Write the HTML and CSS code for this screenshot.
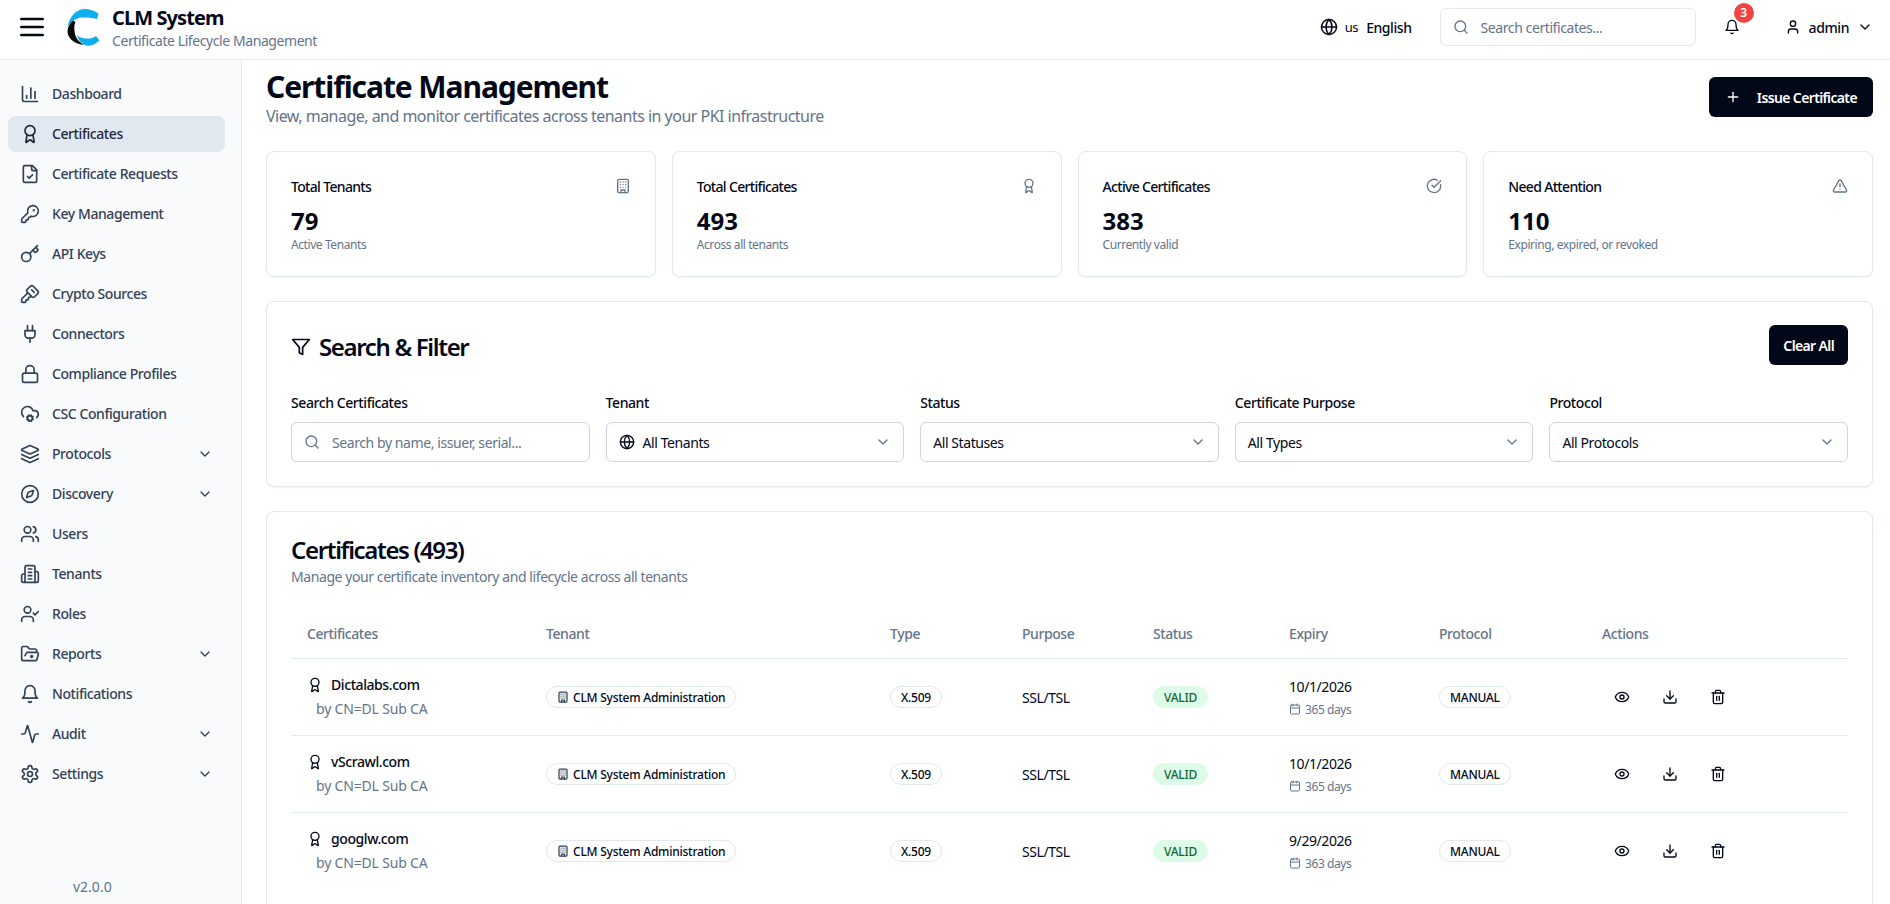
FILE: index.html
```html
<!DOCTYPE html>
<html lang="en">

<head>
    <meta charset="UTF-8">
    <title>CLM System - Certificates</title>
    <link rel="stylesheet" href="styles.css">
</head>

<body>
    <svg class="sprite" xmlns="http://www.w3.org/2000/svg">
        <symbol id="i-menu" viewBox="0 0 24 24"><path d="M4 6h16M4 12h16M4 18h16"/></symbol>
        <symbol id="i-chart" viewBox="0 0 24 24"><path d="M3 3v16a2 2 0 0 0 2 2h16"/><path d="M18 17V9"/><path d="M13 17V5"/><path d="M8 17v-3"/></symbol>
        <symbol id="i-award" viewBox="0 0 24 24"><path d="m15.477 12.89 1.515 8.526a.5.5 0 0 1-.81.47l-3.58-2.687a1 1 0 0 0-1.197 0l-3.586 2.686a.5.5 0 0 1-.81-.469l1.514-8.526"/><circle cx="12" cy="8" r="6"/></symbol>
        <symbol id="i-file-check" viewBox="0 0 24 24"><path d="M15 2H6a2 2 0 0 0-2 2v16a2 2 0 0 0 2 2h12a2 2 0 0 0 2-2V7Z"/><path d="M14 2v4a2 2 0 0 0 2 2h4"/><path d="m9 15 2 2 4-4"/></symbol>
        <symbol id="i-key-round" viewBox="0 0 24 24"><path d="M2.586 17.414A2 2 0 0 0 2 18.828V21a1 1 0 0 0 1 1h3a1 1 0 0 0 1-1v-1a1 1 0 0 1 1-1h1a1 1 0 0 0 1-1v-1a1 1 0 0 1 1-1h.172a2 2 0 0 0 1.414-.586l.814-.814a6.5 6.5 0 1 0-4-4z"/><circle cx="16.5" cy="7.5" r=".5"/></symbol>
        <symbol id="i-key" viewBox="0 0 24 24"><path d="m15.5 7.5 2.3 2.3a1 1 0 0 0 1.4 0l2.1-2.1a1 1 0 0 0 0-1.4L19 4"/><path d="m21 2-9.6 9.6"/><circle cx="7.5" cy="15.5" r="5.5"/></symbol>
        <symbol id="i-key-square" viewBox="0 0 24 24"><path d="M12.4 2.7a2.5 2.5 0 0 1 3.4 0l5.5 5.5a2.5 2.5 0 0 1 0 3.4l-3.7 3.7a2.5 2.5 0 0 1-3.4 0L8.7 9.8a2.5 2.5 0 0 1 0-3.4z"/><path d="m14 7 3 3"/><path d="m9.4 10.6-6.814 6.814A2 2 0 0 0 2 18.828V21a1 1 0 0 0 1 1h3a1 1 0 0 0 1-1v-1a1 1 0 0 1 1-1h1a1 1 0 0 0 1-1v-1a1 1 0 0 1 1-1h.172a2 2 0 0 0 1.414-.586l.814-.814"/></symbol>
        <symbol id="i-plug" viewBox="0 0 24 24"><path d="M12 22v-5"/><path d="M9 8V2"/><path d="M15 8V2"/><path d="M18 8v5a4 4 0 0 1-4 4h-4a4 4 0 0 1-4-4V8Z"/></symbol>
        <symbol id="i-lock" viewBox="0 0 24 24"><rect x="3" y="11" width="18" height="11" rx="2"/><path d="M7 11V7a5 5 0 0 1 10 0v4"/></symbol>
        <symbol id="i-cloud-cog" viewBox="0 0 24 24"><path d="M4.2 15.1A7 7 0 1 1 15.71 8h1.79a4.5 4.5 0 0 1 2.5 8.2"/><circle cx="12" cy="17" r="3"/><path d="m15.7 18.4-.9-.3"/><path d="m9.2 15.9-.9-.3"/><path d="m10.6 20.7.3-.9"/><path d="m13.1 14.2.3-.9"/><path d="m13.6 20.7-.4-1"/><path d="m10.8 14.3-.4-1"/><path d="m8.3 18.6 1-.4"/><path d="m14.7 15.8 1-.4"/></symbol>
        <symbol id="i-layers" viewBox="0 0 24 24"><path d="m12.83 2.18a2 2 0 0 0-1.66 0L2.6 6.08a1 1 0 0 0 0 1.83l8.58 3.91a2 2 0 0 0 1.66 0l8.58-3.9a1 1 0 0 0 0-1.83Z"/><path d="m22 17.65-9.17 4.16a2 2 0 0 1-1.66 0L2 17.65"/><path d="m22 12.65-9.17 4.16a2 2 0 0 1-1.66 0L2 12.65"/></symbol>
        <symbol id="i-compass" viewBox="0 0 24 24"><circle cx="12" cy="12" r="10"/><path d="m16.24 7.76-1.804 5.411a2 2 0 0 1-1.265 1.265L7.76 16.24l1.804-5.411a2 2 0 0 1 1.265-1.265z"/></symbol>
        <symbol id="i-users" viewBox="0 0 24 24"><path d="M16 21v-2a4 4 0 0 0-4-4H6a4 4 0 0 0-4 4v2"/><circle cx="9" cy="7" r="4"/><path d="M22 21v-2a4 4 0 0 0-3-3.87"/><path d="M16 3.13a4 4 0 0 1 0 7.75"/></symbol>
        <symbol id="i-building-2" viewBox="0 0 24 24"><path d="M6 22V4a2 2 0 0 1 2-2h8a2 2 0 0 1 2 2v18Z"/><path d="M6 12H4a2 2 0 0 0-2 2v6a2 2 0 0 0 2 2h2"/><path d="M18 9h2a2 2 0 0 1 2 2v9a2 2 0 0 1-2 2h-2"/><path d="M10 6h4"/><path d="M10 10h4"/><path d="M10 14h4"/><path d="M10 18h4"/></symbol>
        <symbol id="i-user-check" viewBox="0 0 24 24"><path d="M16 21v-2a4 4 0 0 0-4-4H6a4 4 0 0 0-4 4v2"/><circle cx="9" cy="7" r="4"/><path d="m16 11 2 2 4-4"/></symbol>
        <symbol id="i-folder" viewBox="0 0 24 24"><path d="m6 14 1.45-2.9A2 2 0 0 1 9.24 10H20a2 2 0 0 1 1.94 2.5l-1.55 6a2 2 0 0 1-1.94 1.5H4a2 2 0 0 1-2-2V5c0-1.1.9-2 2-2h3.93a2 2 0 0 1 1.66.9l.82 1.2a2 2 0 0 0 1.66.9H18a2 2 0 0 1 2 2v2"/><circle cx="14" cy="15" r="1"/></symbol>
        <symbol id="i-bell" viewBox="0 0 24 24"><path d="M6 8a6 6 0 0 1 12 0c0 7 3 9 3 9H3s3-2 3-9"/><path d="M10.3 21a1.94 1.94 0 0 0 3.4 0"/></symbol>
        <symbol id="i-activity" viewBox="0 0 24 24"><path d="M22 12h-2.48a2 2 0 0 0-1.93 1.46l-2.35 8.36a.25.25 0 0 1-.48 0L9.24 2.18a.25.25 0 0 0-.48 0l-2.35 8.36A2 2 0 0 1 4.49 12H2"/></symbol>
        <symbol id="i-settings" viewBox="0 0 24 24"><path d="M12.22 2h-.44a2 2 0 0 0-2 2v.18a2 2 0 0 1-1 1.73l-.43.25a2 2 0 0 1-2 0l-.15-.08a2 2 0 0 0-2.73.73l-.22.38a2 2 0 0 0 .73 2.73l.15.1a2 2 0 0 1 1 1.72v.51a2 2 0 0 1-1 1.74l-.15.09a2 2 0 0 0-.73 2.73l.22.38a2 2 0 0 0 2.73.73l.15-.08a2 2 0 0 1 2 0l.43.25a2 2 0 0 1 1 1.73V20a2 2 0 0 0 2 2h.44a2 2 0 0 0 2-2v-.18a2 2 0 0 1 1-1.73l.43-.25a2 2 0 0 1 2 0l.15.08a2 2 0 0 0 2.73-.73l.22-.39a2 2 0 0 0-.73-2.73l-.15-.08a2 2 0 0 1-1-1.74v-.5a2 2 0 0 1 1-1.74l.15-.09a2 2 0 0 0 .73-2.73l-.22-.38a2 2 0 0 0-2.73-.73l-.15.08a2 2 0 0 1-2 0l-.43-.25a2 2 0 0 1-1-1.73V4a2 2 0 0 0-2-2z"/><circle cx="12" cy="12" r="3"/></symbol>
        <symbol id="i-chevron" viewBox="0 0 24 24"><path d="m6 9 6 6 6-6"/></symbol>
        <symbol id="i-globe" viewBox="0 0 24 24"><circle cx="12" cy="12" r="10"/><path d="M12 2a14.5 14.5 0 0 0 0 20 14.5 14.5 0 0 0 0-20"/><path d="M2 12h20"/></symbol>
        <symbol id="i-search" viewBox="0 0 24 24"><path d="m21 21-4.3-4.3"/><circle cx="11" cy="11" r="8"/></symbol>
        <symbol id="i-user" viewBox="0 0 24 24"><path d="M19 21v-2a4 4 0 0 0-4-4H9a4 4 0 0 0-4 4v2"/><circle cx="12" cy="7" r="4"/></symbol>
        <symbol id="i-plus" viewBox="0 0 24 24"><path d="M5 12h14"/><path d="M12 5v14"/></symbol>
        <symbol id="i-building" viewBox="0 0 24 24"><rect x="4" y="2" width="16" height="20" rx="2"/><path d="M9 22v-4h6v4"/><path d="M8 6h.01M12 6h.01M16 6h.01M8 10h.01M12 10h.01M16 10h.01M8 14h.01M12 14h.01M16 14h.01"/></symbol>
        <symbol id="i-check" viewBox="0 0 24 24"><path d="M21.801 10A10 10 0 1 1 17 3.335"/><path d="m9 11 3 3L22 4"/></symbol>
        <symbol id="i-alert" viewBox="0 0 24 24"><path d="m21.73 18-8-14a2 2 0 0 0-3.48 0l-8 14A2 2 0 0 0 4 21h16a2 2 0 0 0 1.73-3"/><path d="M12 9v4"/><path d="M12 17h.01"/></symbol>
        <symbol id="i-filter" viewBox="0 0 24 24"><path d="M22 3H2l8 9.46V19l4 2v-8.54Z"/></symbol>
        <symbol id="i-calendar" viewBox="0 0 24 24"><path d="M8 2v4"/><path d="M16 2v4"/><rect x="3" y="4" width="18" height="18" rx="2"/><path d="M3 10h18"/></symbol>
        <symbol id="i-eye" viewBox="0 0 24 24"><path d="M2.062 12.348a1 1 0 0 1 0-.696 10.75 10.75 0 0 1 19.876 0 1 1 0 0 1 0 .696 10.75 10.75 0 0 1-19.876 0"/><circle cx="12" cy="12" r="3"/></symbol>
        <symbol id="i-download" viewBox="0 0 24 24"><path d="M21 15v4a2 2 0 0 1-2 2H5a2 2 0 0 1-2-2v-4"/><path d="m7 10 5 5 5-5"/><path d="M12 15V3"/></symbol>
        <symbol id="i-trash" viewBox="0 0 24 24"><path d="M3 6h18"/><path d="M19 6v14c0 1-1 2-2 2H7c-1 0-2-1-2-2V6"/><path d="M8 6V4c0-1 1-2 2-2h4c1 0 2 1 2 2v2"/><path d="M10 11v6"/><path d="M14 11v6"/></symbol>
    </svg>

    <header class="topbar">
        <button class="menu-btn" type="button"><svg class="icon icon-menu"><use href="#i-menu"/></svg></button>
        <svg class="logo" viewBox="0 0 33 37" xmlns="http://www.w3.org/2000/svg">
            <path class="logo-blue" d="M31.5 4.7C27 1.5 22.5 0 18 0 9 0 2 8 .5 18.5 3 13.5 8.5 9 15 8.6c5.5-.4 11 .2 15 1.5Z"/>
            <path class="logo-blue" d="M9.5 26C13 29 19 30 23 29.5c2.5-.5 4.5-1.5 6-2.5l3.5 4.5C29 34.5 25.5 36.5 22 36.8 18 37 14 34 12 31Z"/>
            <path class="logo-black" d="M6 11.5C1.5 15.5 0 20.5.8 24.5 2 30.5 9 35.5 17 36 12.500 33.500 9 29.500 8 25 7 20 7 16 8.500 13Z"/>
        </svg>
        <div class="brand">
            <div class="brand-name">CLM System</div>
            <div class="brand-sub">Certificate Lifecycle Management</div>
        </div>
        <div class="topbar-right">
            <div class="lang">
                <svg class="icon icon-16"><use href="#i-globe"/></svg>
                <span class="lang-code">us</span>
                <span class="lang-name">English</span>
            </div>
            <div class="top-search">
                <svg class="icon icon-16"><use href="#i-search"/></svg>
                <span>Search certificates...</span>
            </div>
            <div class="bell">
                <svg class="icon icon-16"><use href="#i-bell"/></svg>
                <span class="badge-count">3</span>
            </div>
            <div class="user">
                <svg class="icon icon-16"><use href="#i-user"/></svg>
                <span class="user-name">admin</span>
                <svg class="icon icon-16"><use href="#i-chevron"/></svg>
            </div>
        </div>
    </header>

    <div class="shell">
        <aside class="sidebar">
            <nav class="nav">
                <a class="nav-item"><svg class="icon icon-20"><use href="#i-chart"/></svg><span>Dashboard</span></a>
                <a class="nav-item active"><svg class="icon icon-20"><use href="#i-award"/></svg><span>Certificates</span></a>
                <a class="nav-item"><svg class="icon icon-20"><use href="#i-file-check"/></svg><span>Certificate Requests</span></a>
                <a class="nav-item"><svg class="icon icon-20"><use href="#i-key-round"/></svg><span>Key Management</span></a>
                <a class="nav-item"><svg class="icon icon-20"><use href="#i-key"/></svg><span>API Keys</span></a>
                <a class="nav-item"><svg class="icon icon-20"><use href="#i-key-square"/></svg><span>Crypto Sources</span></a>
                <a class="nav-item"><svg class="icon icon-20"><use href="#i-plug"/></svg><span>Connectors</span></a>
                <a class="nav-item"><svg class="icon icon-20"><use href="#i-lock"/></svg><span>Compliance Profiles</span></a>
                <a class="nav-item"><svg class="icon icon-20"><use href="#i-cloud-cog"/></svg><span>CSC Configuration</span></a>
                <a class="nav-item"><svg class="icon icon-20"><use href="#i-layers"/></svg><span>Protocols</span><svg class="icon icon-16 nav-chevron"><use href="#i-chevron"/></svg></a>
                <a class="nav-item"><svg class="icon icon-20"><use href="#i-compass"/></svg><span>Discovery</span><svg class="icon icon-16 nav-chevron"><use href="#i-chevron"/></svg></a>
                <a class="nav-item"><svg class="icon icon-20"><use href="#i-users"/></svg><span>Users</span></a>
                <a class="nav-item"><svg class="icon icon-20"><use href="#i-building-2"/></svg><span>Tenants</span></a>
                <a class="nav-item"><svg class="icon icon-20"><use href="#i-user-check"/></svg><span>Roles</span></a>
                <a class="nav-item"><svg class="icon icon-20"><use href="#i-folder"/></svg><span>Reports</span><svg class="icon icon-16 nav-chevron"><use href="#i-chevron"/></svg></a>
                <a class="nav-item"><svg class="icon icon-20"><use href="#i-bell"/></svg><span>Notifications</span></a>
                <a class="nav-item"><svg class="icon icon-20"><use href="#i-activity"/></svg><span>Audit</span><svg class="icon icon-16 nav-chevron"><use href="#i-chevron"/></svg></a>
                <a class="nav-item"><svg class="icon icon-20"><use href="#i-settings"/></svg><span>Settings</span><svg class="icon icon-16 nav-chevron"><use href="#i-chevron"/></svg></a>
            </nav>
            <div class="version">v2.0.0</div>
        </aside>

        <main class="main">
            <div class="page-head">
                <div>
                    <h1>Certificate Management</h1>
                    <p>View, manage, and monitor certificates across tenants in your PKI infrastructure</p>
                </div>
                <button class="btn-dark btn-issue" type="button"><svg class="icon icon-16"><use href="#i-plus"/></svg>Issue Certificate</button>
            </div>

            <section class="stats">
                <div class="card stat">
                    <div class="stat-top"><span>Total Tenants</span><svg class="icon icon-16"><use href="#i-building"/></svg></div>
                    <div class="stat-num">79</div>
                    <div class="stat-note">Active Tenants</div>
                </div>
                <div class="card stat">
                    <div class="stat-top"><span>Total Certificates</span><svg class="icon icon-16"><use href="#i-award"/></svg></div>
                    <div class="stat-num">493</div>
                    <div class="stat-note">Across all tenants</div>
                </div>
                <div class="card stat">
                    <div class="stat-top"><span>Active Certificates</span><svg class="icon icon-16"><use href="#i-check"/></svg></div>
                    <div class="stat-num">383</div>
                    <div class="stat-note">Currently valid</div>
                </div>
                <div class="card stat">
                    <div class="stat-top"><span>Need Attention</span><svg class="icon icon-16"><use href="#i-alert"/></svg></div>
                    <div class="stat-num">110</div>
                    <div class="stat-note">Expiring, expired, or revoked</div>
                </div>
            </section>

            <section class="card filter">
                <div class="filter-head">
                    <h2><svg class="icon icon-20"><use href="#i-filter"/></svg>Search &amp; Filter</h2>
                    <button class="btn-dark btn-clear" type="button">Clear All</button>
                </div>
                <div class="filter-grid">
                    <div class="field">
                        <label>Search Certificates</label>
                        <div class="control control-search"><svg class="icon icon-16"><use href="#i-search"/></svg><span>Search by name, issuer, serial...</span></div>
                    </div>
                    <div class="field">
                        <label>Tenant</label>
                        <div class="control"><svg class="icon icon-16 globe"><use href="#i-globe"/></svg><span class="value">All Tenants</span><svg class="icon icon-16 caret"><use href="#i-chevron"/></svg></div>
                    </div>
                    <div class="field">
                        <label>Status</label>
                        <div class="control"><span class="value">All Statuses</span><svg class="icon icon-16 caret"><use href="#i-chevron"/></svg></div>
                    </div>
                    <div class="field">
                        <label>Certificate Purpose</label>
                        <div class="control"><span class="value">All Types</span><svg class="icon icon-16 caret"><use href="#i-chevron"/></svg></div>
                    </div>
                    <div class="field">
                        <label>Protocol</label>
                        <div class="control"><span class="value">All Protocols</span><svg class="icon icon-16 caret"><use href="#i-chevron"/></svg></div>
                    </div>
                </div>
            </section>

            <section class="card certs">
                <h2>Certificates (493)</h2>
                <p class="certs-sub">Manage your certificate inventory and lifecycle across all tenants</p>
                <table class="cert-table">
                    <thead>
                        <tr>
                            <th class="col-cert">Certificates</th>
                            <th class="col-tenant">Tenant</th>
                            <th class="col-type">Type</th>
                            <th class="col-purpose">Purpose</th>
                            <th class="col-status">Status</th>
                            <th class="col-expiry">Expiry</th>
                            <th class="col-protocol">Protocol</th>
                            <th>Actions</th>
                        </tr>
                    </thead>
                    <tbody>
                        <tr>
                            <td>
                                <div class="cert-name"><svg class="icon icon-16"><use href="#i-award"/></svg>Dictalabs.com</div>
                                <div class="cert-by">by CN=DL Sub CA</div>
                            </td>
                            <td><span class="pill"><svg class="icon icon-12"><use href="#i-building"/></svg>CLM System Administration</span></td>
                            <td><span class="pill">X.509</span></td>
                            <td>SSL/TSL</td>
                            <td><span class="pill pill-valid">VALID</span></td>
                            <td>
                                <div>10/1/2026</div>
                                <div class="days"><svg class="icon icon-12"><use href="#i-calendar"/></svg>365 days</div>
                            </td>
                            <td><span class="pill">MANUAL</span></td>
                            <td>
                                <div class="actions">
                                    <button type="button"><svg class="icon icon-16"><use href="#i-eye"/></svg></button>
                                    <button type="button"><svg class="icon icon-16"><use href="#i-download"/></svg></button>
                                    <button type="button"><svg class="icon icon-16"><use href="#i-trash"/></svg></button>
                                </div>
                            </td>
                        </tr>
                        <tr>
                            <td>
                                <div class="cert-name"><svg class="icon icon-16"><use href="#i-award"/></svg>vScrawl.com</div>
                                <div class="cert-by">by CN=DL Sub CA</div>
                            </td>
                            <td><span class="pill"><svg class="icon icon-12"><use href="#i-building"/></svg>CLM System Administration</span></td>
                            <td><span class="pill">X.509</span></td>
                            <td>SSL/TSL</td>
                            <td><span class="pill pill-valid">VALID</span></td>
                            <td>
                                <div>10/1/2026</div>
                                <div class="days"><svg class="icon icon-12"><use href="#i-calendar"/></svg>365 days</div>
                            </td>
                            <td><span class="pill">MANUAL</span></td>
                            <td>
                                <div class="actions">
                                    <button type="button"><svg class="icon icon-16"><use href="#i-eye"/></svg></button>
                                    <button type="button"><svg class="icon icon-16"><use href="#i-download"/></svg></button>
                                    <button type="button"><svg class="icon icon-16"><use href="#i-trash"/></svg></button>
                                </div>
                            </td>
                        </tr>
                        <tr>
                            <td>
                                <div class="cert-name"><svg class="icon icon-16"><use href="#i-award"/></svg>googlw.com</div>
                                <div class="cert-by">by CN=DL Sub CA</div>
                            </td>
                            <td><span class="pill"><svg class="icon icon-12"><use href="#i-building"/></svg>CLM System Administration</span></td>
                            <td><span class="pill">X.509</span></td>
                            <td>SSL/TSL</td>
                            <td><span class="pill pill-valid">VALID</span></td>
                            <td>
                                <div>9/29/2026</div>
                                <div class="days"><svg class="icon icon-12"><use href="#i-calendar"/></svg>363 days</div>
                            </td>
                            <td><span class="pill">MANUAL</span></td>
                            <td>
                                <div class="actions">
                                    <button type="button"><svg class="icon icon-16"><use href="#i-eye"/></svg></button>
                                    <button type="button"><svg class="icon icon-16"><use href="#i-download"/></svg></button>
                                    <button type="button"><svg class="icon icon-16"><use href="#i-trash"/></svg></button>
                                </div>
                            </td>
                        </tr>
                    </tbody>
                </table>
            </section>
        </main>
    </div>
</body>

</html>
```

FILE: styles.css
```css
* {
    box-sizing: border-box;
}

html,
body {
    height: 100%;
    margin: 0;
    overflow: hidden;
}

body {
    display: flex;
    flex-direction: column;
    background-color: #ffffff;
    color: #020817;
    font-family: "Noto Sans", sans-serif;
    font-size: 14px;
    letter-spacing: -0.03em;
}

h1,
h2,
p {
    margin: 0;
}

button {
    font-family: inherit;
    letter-spacing: inherit;
    cursor: pointer;
}

.sprite {
    display: none;
}

.icon {
    flex: none;
    fill: none;
    stroke: currentColor;
    stroke-width: 2;
    stroke-linecap: round;
    stroke-linejoin: round;
}

.icon-12 {
    width: 12px;
    height: 12px;
}

.icon-16 {
    width: 16px;
    height: 16px;
}

.icon-20 {
    width: 20px;
    height: 20px;
}

/* top bar */
.topbar {
    display: flex;
    align-items: center;
    flex: none;
    height: 60px;
    padding: 0 17px 5px 16px;
    border-bottom: 1px solid #e2e8f0;
}

.menu-btn {
    display: flex;
    padding: 0;
    border: none;
    background: none;
    color: #020817;
}

.icon-menu {
    width: 32px;
    height: 32px;
}

.logo {
    flex: none;
    width: 33px;
    height: 37px;
    margin-left: 19px;
}

.logo-blue {
    fill: #0eaeef;
}

.logo-black {
    fill: #0a0a0a;
}

.brand {
    margin: 2px 0 0 12px;
}

.brand-name {
    font-size: 20px;
    font-weight: 700;
    line-height: 26px;
    letter-spacing: -0.045em;
}

.brand-sub {
    color: #64748b;
    font-size: 14px;
    line-height: 20px;
}

.topbar-right {
    display: flex;
    align-items: center;
    margin-left: auto;
}

.lang {
    display: flex;
    align-items: center;
}

.lang .icon {
    width: 18px;
    height: 18px;
}

.lang-code {
    margin-left: 7px;
    font-size: 13px;
}

.lang-name {
    margin-left: 8px;
    font-weight: 500;
}

.top-search {
    display: flex;
    align-items: center;
    gap: 12px;
    width: 256px;
    height: 38px;
    margin-left: 28px;
    padding: 0 12px;
    border: 1px solid #e2e8f0;
    border-radius: 6px;
    color: #64748b;
}

.bell {
    position: relative;
    display: flex;
    margin-left: 28px;
}

.badge-count {
    position: absolute;
    top: -16px;
    left: 10px;
    width: 20px;
    height: 20px;
    border-radius: 50%;
    background-color: #ef4444;
    color: #ffffff;
    font-size: 12px;
    font-weight: 600;
    line-height: 20px;
    text-align: center;
}

.user {
    display: flex;
    align-items: center;
    margin-left: 45px;
}

.user-name {
    margin: 0 8px;
    font-weight: 500;
}

/* sidebar and main */
.shell {
    display: flex;
    flex: 1;
    min-height: 0;
}

.sidebar {
    display: flex;
    flex-direction: column;
    flex: none;
    width: 242px;
    padding: 16px 16px 0 8px;
    border-right: 1px solid #e2e8f0;
    background-color: #f8fafc;
}

.nav {
    display: flex;
    flex-direction: column;
    gap: 4px;
}

.nav-item {
    display: flex;
    align-items: center;
    gap: 12px;
    height: 36px;
    padding: 0 12px;
    border-radius: 8px;
    color: #334155;
    font-weight: 500;
}

.nav-item span {
    padding-bottom: 2px;
}

.nav-item.active {
    background-color: #e2e8f0;
    color: #1e293b;
}

.nav-chevron {
    margin-left: auto;
}

.version {
    margin-top: auto;
    padding: 0 0 8px 65px;
    color: #64748b;
    font-size: 14px;
    letter-spacing: 0;
}

.main {
    flex: 1;
    min-width: 0;
    padding: 11px 17px 0 24px;
    overflow: hidden;
}

.page-head {
    display: flex;
    justify-content: space-between;
    align-items: flex-start;
    height: 80px;
}

h1 {
    font-size: 30px;
    font-weight: 700;
    line-height: 32px;
    letter-spacing: -0.036em;
}

.page-head p {
    margin-top: 1px;
    color: #64748b;
    font-size: 16px;
    line-height: 24px;
    letter-spacing: -0.0325em;
}

.btn-dark {
    display: flex;
    align-items: center;
    border: none;
    border-radius: 6px;
    background-color: #020817;
    color: #ffffff;
    font-size: 14px;
    font-weight: 600;
    letter-spacing: -0.045em;
}

.btn-issue {
    gap: 16px;
    height: 40px;
    margin-top: 6px;
    padding: 0 16px;
}

.card {
    border: 1px solid #e2e8f0;
    border-radius: 8px;
    background-color: #ffffff;
    box-shadow: 0 1px 2px rgba(0, 0, 0, 0.05);
}

.stats {
    display: grid;
    grid-template-columns: repeat(4, 1fr);
    gap: 16px;
}

.stat {
    height: 126px;
    padding: 24px;
}

.stat-top {
    display: flex;
    justify-content: space-between;
    align-items: center;
    height: 20px;
    font-weight: 500;
    letter-spacing: -0.048em;
}

.stat-top .icon {
    color: #64748b;
}

.stat-num {
    margin-top: 9px;
    font-size: 24px;
    font-weight: 700;
    line-height: 32px;
    letter-spacing: 0;
}

.stat-note {
    color: #64748b;
    font-size: 12px;
    line-height: 16px;
}

.filter {
    height: 186px;
    margin-top: 24px;
    padding: 23px 24px 0;
}

.filter-head {
    display: flex;
    justify-content: space-between;
    align-items: center;
    height: 40px;
}

h2 {
    font-size: 24px;
    font-weight: 600;
    line-height: 32px;
    letter-spacing: -0.056em;
}

.filter-head h2 {
    display: flex;
    align-items: center;
    gap: 8px;
    padding-top: 4px;
}

.btn-clear {
    height: 40px;
    padding: 0 14px;
}

.filter-grid {
    display: grid;
    grid-template-columns: repeat(5, 1fr);
    gap: 16px;
    margin-top: 28px;
}

.field label {
    display: block;
    height: 20px;
    margin-bottom: 9px;
    font-weight: 500;
    line-height: 20px;
}

.control {
    display: flex;
    align-items: center;
    height: 40px;
    padding: 0 12px;
    border: 1px solid #cbd5e1;
    border-radius: 6px;
}

.control-search {
    gap: 12px;
    color: #64748b;
}

.globe {
    margin-right: 8px;
}

.value {
    flex: 1;
}

.caret {
    color: #64748b;
}

.certs {
    height: 600px;
    margin-top: 24px;
    padding: 22px 24px 0;
}

.certs-sub {
    margin-top: 1px;
    color: #64748b;
    line-height: 20px;
}

.cert-table {
    width: 100%;
    margin-top: 23px;
    border-collapse: collapse;
    table-layout: fixed;
}

.col-cert {
    width: 239px;
}

.col-tenant {
    width: 344px;
}

.col-type {
    width: 132px;
}

.col-purpose {
    width: 131px;
}

.col-status {
    width: 136px;
}

.col-expiry {
    width: 150px;
}

.col-protocol {
    width: 163px;
}

.cert-table th {
    height: 48px;
    padding: 0 16px;
    border-bottom: 1px solid #e2e8f0;
    color: #64748b;
    font-weight: 500;
    text-align: left;
}

.cert-table td {
    height: 77px;
    padding: 1px 16px 0;
    border-bottom: 1px solid #e2e8f0;
}

.cert-table tr:last-child td {
    border-bottom: none;
}

.cert-name {
    display: flex;
    align-items: center;
    gap: 8px;
    font-weight: 500;
    line-height: 20px;
}

.cert-by {
    margin: 4px 0 0 9px;
    color: #64748b;
    line-height: 20px;
    letter-spacing: -0.013em;
}

.pill {
    display: inline-flex;
    align-items: center;
    gap: 4px;
    height: 22px;
    padding: 0 10px;
    border: 1px solid #e2e8f0;
    border-radius: 11px;
    font-size: 12px;
    font-weight: 500;
    letter-spacing: -0.02em;
}

.pill .icon {
    color: #334155;
    stroke-width: 2.5;
}

.pill-valid {
    border-color: #dcfce7;
    background-color: #dcfce7;
    color: #166534;
}

.days {
    display: flex;
    align-items: center;
    gap: 4px;
    margin-top: 5px;
    color: #64748b;
    font-size: 12px;
}

.actions {
    display: flex;
    gap: 8px;
    margin-top: 3px;
}

.actions button {
    width: 40px;
    height: 40px;
    padding: 0;
    border: none;
    background: none;
    color: #020817;
}
```
